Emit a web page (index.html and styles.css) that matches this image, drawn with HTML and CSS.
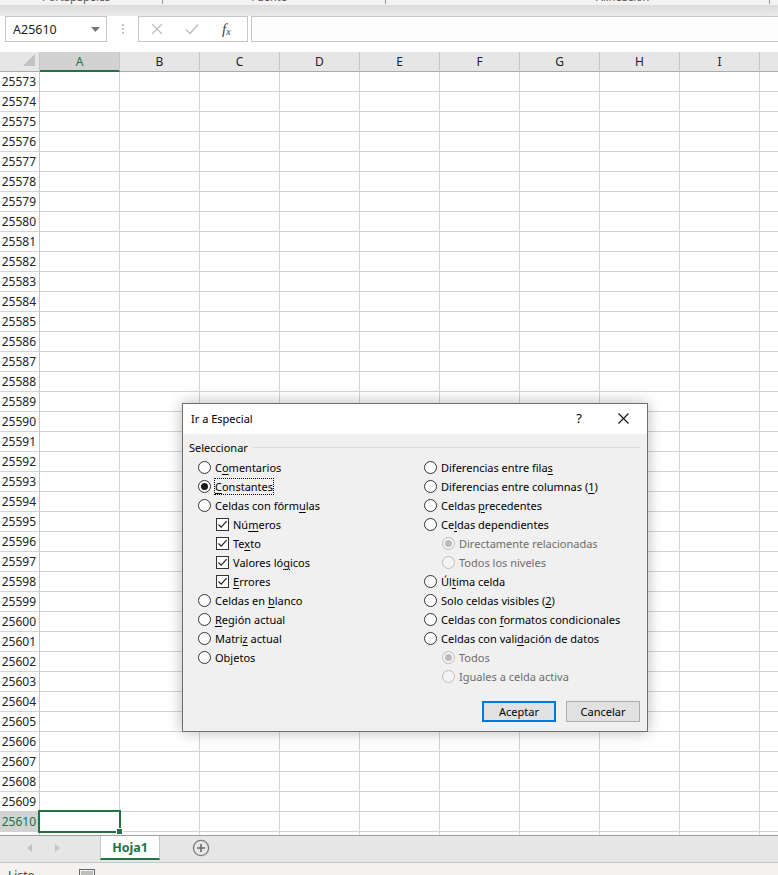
FILE: index.html
```html
<!doctype html>
<html lang="es">
<head>
    <meta charset="UTF-8">
    <title>Ir a Especial</title>
    <link rel="stylesheet" href="styles.css">
</head>
<body>
<div class="app">

    <div class="ribbon-tail">
        <div class="ribbon-labels">
            <span class="grp g-1">Portapapeles</span><i class="launch l-1"></i>
            <span class="grp g-2">Fuente</span><i class="launch l-2"></i>
            <span class="grp g-3">Alineación</span><i class="launch l-3"></i>
            <span class="grp g-4">Número</span>
        </div>
    </div>

    <div class="formula-bar">
        <div class="name-box">
            <span>A25610</span>
            <svg width="9" height="5" viewBox="0 0 9 5"><path d="M0 0 H9 L4.5 5 Z" fill="#777"/></svg>
        </div>
        <div class="grip"><i></i><i></i><i></i></div>
        <div class="fx-box">
            <svg width="12" height="12" viewBox="0 0 12 12"><path d="M1 1 L11 11 M11 1 L1 11" stroke="#bdbdbd" stroke-width="1.2"/></svg>
            <svg width="14" height="12" viewBox="0 0 14 12"><path d="M1 6.5 L5 10.5 L13 1.5" stroke="#bdbdbd" stroke-width="1.4" fill="none"/></svg>
            <span class="fx">f<sub>x</sub></span>
        </div>
        <div class="formula-input"></div>
    </div>

    <div class="sheet">
        <div class="corner">
            <svg width="13" height="13" viewBox="0 0 13 13"><path d="M12 0 V12 H0 Z" fill="#c2c2c2"/></svg>
        </div>
        <div class="col-heads">
            <div class="col-head active">A</div>
            <div class="col-head">B</div>
            <div class="col-head">C</div>
            <div class="col-head">D</div>
            <div class="col-head">E</div>
            <div class="col-head">F</div>
            <div class="col-head">G</div>
            <div class="col-head">H</div>
            <div class="col-head">I</div>
            <div class="col-head">J</div>
        </div>
        <div class="row-heads">
            <div class="row-head">25573</div>
            <div class="row-head">25574</div>
            <div class="row-head">25575</div>
            <div class="row-head">25576</div>
            <div class="row-head">25577</div>
            <div class="row-head">25578</div>
            <div class="row-head">25579</div>
            <div class="row-head">25580</div>
            <div class="row-head">25581</div>
            <div class="row-head">25582</div>
            <div class="row-head">25583</div>
            <div class="row-head">25584</div>
            <div class="row-head">25585</div>
            <div class="row-head">25586</div>
            <div class="row-head">25587</div>
            <div class="row-head">25588</div>
            <div class="row-head">25589</div>
            <div class="row-head">25590</div>
            <div class="row-head">25591</div>
            <div class="row-head">25592</div>
            <div class="row-head">25593</div>
            <div class="row-head">25594</div>
            <div class="row-head">25595</div>
            <div class="row-head">25596</div>
            <div class="row-head">25597</div>
            <div class="row-head">25598</div>
            <div class="row-head">25599</div>
            <div class="row-head">25600</div>
            <div class="row-head">25601</div>
            <div class="row-head">25602</div>
            <div class="row-head">25603</div>
            <div class="row-head">25604</div>
            <div class="row-head">25605</div>
            <div class="row-head">25606</div>
            <div class="row-head">25607</div>
            <div class="row-head">25608</div>
            <div class="row-head">25609</div>
            <div class="row-head active">25610</div>
            <div class="row-head">25611</div>
        </div>
        <div class="cells">
            <div class="selection"><i class="handle"></i></div>
        </div>
    </div>

    <div class="tabs">
        <div class="tab-nav">
            <svg width="5" height="8" viewBox="0 0 5 8"><path d="M5 0 V8 L0 4 Z" fill="#c4c4c4"/></svg>
            <svg width="5" height="8" viewBox="0 0 5 8"><path d="M0 0 V8 L5 4 Z" fill="#c4c4c4"/></svg>
        </div>
        <div class="tab">Hoja1</div>
        <div class="tab-add">
            <svg width="18" height="18" viewBox="0 0 18 18">
                <circle cx="9" cy="9" r="7.6" fill="none" stroke="#7a7a7a" stroke-width="1.3"/>
                <path d="M9 5 V13 M5 9 H13" stroke="#6a6a6a" stroke-width="1.6"/>
            </svg>
        </div>
    </div>

    <div class="status">
        <span>Listo</span>
        <svg width="16" height="12" viewBox="0 0 16 12"><rect x="0.5" y="0.5" width="15" height="13" fill="none" stroke="#666"/><path d="M2 3 H14 M2 5 H14" stroke="#888"/><circle cx="11" cy="10" r="3" fill="#f3f2f1" stroke="#666"/></svg>
    </div>

    <div class="dialog">
        <div class="dialog-title">
            <span class="dialog-name">Ir a Especial</span>
            <span class="dialog-help">?</span>
            <svg class="dialog-close" width="11" height="11" viewBox="0 0 11 11"><path d="M0.5 0.5 L10.5 10.5 M10.5 0.5 L0.5 10.5" stroke="#111" stroke-width="1.1"/></svg>
        </div>
        <div class="dialog-body">
            <div class="legend"><span>Seleccionar</span><i></i></div>
            <div class="options">
                <div class="opt-col">
                    <div class="opt"><b class="radio"></b><span>C<u>o</u>mentarios</span></div>
                    <div class="opt"><b class="radio on"></b><span class="focus"><u>C</u>onstantes</span></div>
                    <div class="opt"><b class="radio"></b><span>Celdas con fórm<u>u</u>las</span></div>
                    <div class="opt sub"><b class="check"><svg width="11" height="11" viewBox="0 0 11 11"><path d="M1.5 5.5 L4.2 8.2 L9.6 2.2" stroke="#222" stroke-width="1.2" fill="none"/></svg></b><span>Nú<u>m</u>eros</span></div>
                    <div class="opt sub"><b class="check"><svg width="11" height="11" viewBox="0 0 11 11"><path d="M1.5 5.5 L4.2 8.2 L9.6 2.2" stroke="#222" stroke-width="1.2" fill="none"/></svg></b><span>Te<u>x</u>to</span></div>
                    <div class="opt sub"><b class="check"><svg width="11" height="11" viewBox="0 0 11 11"><path d="M1.5 5.5 L4.2 8.2 L9.6 2.2" stroke="#222" stroke-width="1.2" fill="none"/></svg></b><span>Valores ló<u>g</u>icos</span></div>
                    <div class="opt sub"><b class="check"><svg width="11" height="11" viewBox="0 0 11 11"><path d="M1.5 5.5 L4.2 8.2 L9.6 2.2" stroke="#222" stroke-width="1.2" fill="none"/></svg></b><span><u>E</u>rrores</span></div>
                    <div class="opt"><b class="radio"></b><span>Celdas en <u>b</u>lanco</span></div>
                    <div class="opt"><b class="radio"></b><span><u>R</u>egión actual</span></div>
                    <div class="opt"><b class="radio"></b><span>Matri<u>z</u> actual</span></div>
                    <div class="opt"><b class="radio"></b><span>Ob<u>j</u>etos</span></div>
                </div>
                <div class="opt-col">
                    <div class="opt"><b class="radio"></b><span>Diferencias entre fila<u>s</u></span></div>
                    <div class="opt"><b class="radio"></b><span>Diferencias entre columnas (<u>1</u>)</span></div>
                    <div class="opt"><b class="radio"></b><span>Celdas <u>p</u>recedentes</span></div>
                    <div class="opt"><b class="radio"></b><span>Ce<u>l</u>das dependientes</span></div>
                    <div class="opt sub off"><b class="radio on"></b><span>Directamente relacionadas</span></div>
                    <div class="opt sub off"><b class="radio"></b><span>Todos los niveles</span></div>
                    <div class="opt"><b class="radio"></b><span>Úl<u>t</u>ima celda</span></div>
                    <div class="opt"><b class="radio"></b><span>Solo celdas visibles (<u>2</u>)</span></div>
                    <div class="opt"><b class="radio"></b><span>Celdas con <u>f</u>ormatos condicionales</span></div>
                    <div class="opt"><b class="radio"></b><span>Celdas con vali<u>d</u>ación de datos</span></div>
                    <div class="opt sub off"><b class="radio on"></b><span>Todos</span></div>
                    <div class="opt sub off"><b class="radio"></b><span>Iguales a celda activa</span></div>
                </div>
            </div>
            <div class="buttons">
                <button class="btn default">Aceptar</button>
                <button class="btn">Cancelar</button>
            </div>
        </div>
    </div>

</div>
</body>
</html>
```

FILE: styles.css
```css
body {
    margin: 0;
    font: 12px "Noto Sans", "DejaVu Sans", sans-serif;
    color: #222;
    background: #fff;
}

.app {
    position: relative;
    width: 778px;
    height: 875px;
    overflow: hidden;
    display: flex;
    flex-direction: column;
}

/* what is left of the ribbon */
.ribbon-tail {
    height: 16px;
    flex: none;
    background: linear-gradient(#f3f2f1 0, #f3f2f1 5px, #dcdcdc 5px, #ebebeb 16px);
}

.ribbon-labels {
    height: 5px;
    overflow: hidden;
    display: flex;
    align-items: flex-start;
    font-size: 11px;
    color: #555;
}

.grp {
    margin-top: -10px;
    line-height: 14px;
}

.g-1 { margin-left: 42px; }
.g-2 { margin-left: 88px; }
.g-3 { margin-left: 210px; }
.g-4 { margin-left: 112px; }

.launch {
    width: 4px;
    height: 3px;
    border-bottom: 1px solid #999;
    border-right: 1px solid #999;
}

.l-1 { margin-left: 52px; }
.l-2 { margin-left: 98px; }
.l-3 { margin-left: 120px; }

/* formula bar */
.formula-bar {
    flex: none;
    display: flex;
    height: 26px;
    padding-left: 5px;
    margin-bottom: 10px;
}

.name-box,
.fx-box,
.formula-input {
    box-sizing: border-box;
    border: 1px solid #c6c6c6;
    background: #fff;
}

.name-box {
    width: 102px;
    display: flex;
    align-items: center;
    justify-content: space-between;
    padding: 0 6px 0 7px;
    font-size: 12.5px;
    color: #222;
}

.grip {
    width: 31px;
    display: flex;
    flex-direction: column;
    align-items: center;
    justify-content: center;
    gap: 2px;
}

.grip i {
    width: 2px;
    height: 2px;
    background: #c4c4c4;
}

.fx-box {
    width: 110px;
    display: flex;
    align-items: center;
    padding-left: 12px;
    gap: 22px;
}

.fx {
    font: italic 15px "Liberation Serif", serif;
    color: #444;
    margin-left: 1px;
}

.fx sub {
    font-size: 10px;
    vertical-align: -1px;
}

.formula-input {
    flex: 1;
    margin-left: 3px;
    border-right: none;
    background: #fdfdfd;
}

/* grid */
.sheet {
    flex: none;
    display: grid;
    grid-template-columns: 40px 1fr;
    grid-template-rows: 20px 763px;
    overflow: hidden;
}

.corner {
    box-sizing: border-box;
    background: #e6e6e6;
    border-right: 1px solid #c6c6c6;
    border-bottom: 1px solid #ababab;
    display: flex;
    align-items: flex-end;
    justify-content: flex-end;
    padding: 0 3px 4px 0;
}

.col-heads {
    display: flex;
    overflow: hidden;
}

.col-head {
    flex: none;
    box-sizing: border-box;
    width: 80px;
    height: 20px;
    line-height: 19px;
    text-align: center;
    background: #e6e6e6;
    border-right: 1px solid #c6c6c6;
    border-bottom: 1px solid #ababab;
    color: #222;
}

.col-head.active {
    background: #d2d2d2;
    color: #217346;
    border-bottom: 2px solid #217346;
}

.row-heads {
    overflow: hidden;
}

.row-head {
    box-sizing: border-box;
    height: 20px;
    line-height: 19px;
    padding-right: 3px;
    text-align: right;
    border-right: 1px solid #c6c6c6;
    border-bottom: 1px solid #d4d4d4;
    color: #222;
}

.row-head.active {
    background: #d2d2d2;
    color: #217346;
}

.cells {
    position: relative;
    background-image:
        linear-gradient(to right, transparent 79px, #d4d4d4 79px),
        linear-gradient(to bottom, transparent 19px, #d4d4d4 19px);
    background-size: 80px 20px;
}

.selection {
    position: absolute;
    left: -2px;
    top: 738px;
    width: 83px;
    height: 23px;
    box-sizing: border-box;
    border: 2px solid #217346;
}

.handle {
    position: absolute;
    right: -4px;
    bottom: -4px;
    width: 5px;
    height: 5px;
    background: #217346;
    border: 1px solid #fff;
}

/* sheet tabs */
.tabs {
    flex: none;
    box-sizing: border-box;
    height: 28px;
    display: flex;
    align-items: flex-start;
    background: #e6e6e6;
    border-top: 1px solid #9e9e9e;
    border-bottom: 1px solid #c6c6c6;
}

.tab-nav {
    width: 100px;
    height: 24px;
    display: flex;
    align-items: center;
    gap: 23px;
    padding-left: 27px;
    box-sizing: border-box;
}

.tab {
    box-sizing: border-box;
    width: 60px;
    height: 24px;
    line-height: 24px;
    text-align: center;
    background: #fff;
    border-left: 1px solid #c6c6c6;
    border-right: 1px solid #c6c6c6;
    border-bottom: 2px solid #217346;
    font-weight: 700;
    font-size: 12.5px;
    color: #217346;
}

.tab-add {
    margin-left: 32px;
    padding-top: 3px;
}

.status {
    flex: none;
    height: 22px;
    display: flex;
    align-items: flex-start;
    gap: 44px;
    padding: 4px 0 0 8px;
    background: #f3f2f1;
    color: #444;
}

.status svg {
    margin-top: 2px;
}

/* dialog */
.dialog {
    position: absolute;
    left: 182px;
    top: 403px;
    width: 466px;
    height: 329px;
    box-sizing: border-box;
    border: 1px solid #6e6e6e;
    background: #f0f0f0;
    box-shadow: 0 0 14px rgba(0, 0, 0, .28);
    display: flex;
    flex-direction: column;
    font-size: 11px;
    color: #000;
}

.dialog-title {
    height: 30px;
    box-sizing: border-box;
    padding: 0 0 2px 8px;
    display: flex;
    align-items: center;
    background: #fff;
}

.dialog-name {
    flex: 1;
}

.dialog-help {
    font-size: 13px;
    margin-right: 36px;
}

.dialog-close {
    margin-right: 18px;
}

.dialog-body {
    flex: 1;
    padding: 5px 6px 0 6px;
}

.legend {
    display: flex;
    align-items: center;
    height: 16px;
}

.legend i {
    flex: 1;
    height: 1px;
    background: #dcdcdc;
    margin-left: 5px;
}

.options {
    display: flex;
    margin-top: 3px;
    padding-left: 9px;
}

.opt-col:first-child {
    width: 226px;
}

.opt {
    height: 19px;
    display: flex;
    align-items: center;
    gap: 4px;
    white-space: nowrap;
}

.opt.sub {
    padding-left: 18px;
}

.opt.off {
    color: #6d6d6d;
}

.radio,
.check {
    flex: none;
    box-sizing: border-box;
    width: 13px;
    height: 13px;
    border: 1px solid #333;
    background: #fff;
    display: flex;
    align-items: center;
    justify-content: center;
}

.radio {
    border-radius: 50%;
}

.radio.on::after {
    content: "";
    width: 7px;
    height: 7px;
    border-radius: 50%;
    background: #1a1a1a;
}

.off .radio {
    border-color: #bcbcbc;
    background: #f4f4f4;
}

.off .radio.on::after {
    background: #bcbcbc;
}

.focus {
    outline: 1px dotted #000;
    outline-offset: 0;
}

u {
    text-underline-offset: 2px;
}

.buttons {
    display: flex;
    justify-content: flex-end;
    gap: 10px;
    margin-top: 15px;
    padding-right: 1px;
}

.btn {
    width: 74px;
    height: 21px;
    box-sizing: border-box;
    border: 1px solid #adadad;
    background: #e1e1e1;
    font: 11px "Noto Sans", "DejaVu Sans", sans-serif;
    color: #000;
    padding: 0;
}

.btn.default {
    border: 2px solid #0078d7;
}
```
